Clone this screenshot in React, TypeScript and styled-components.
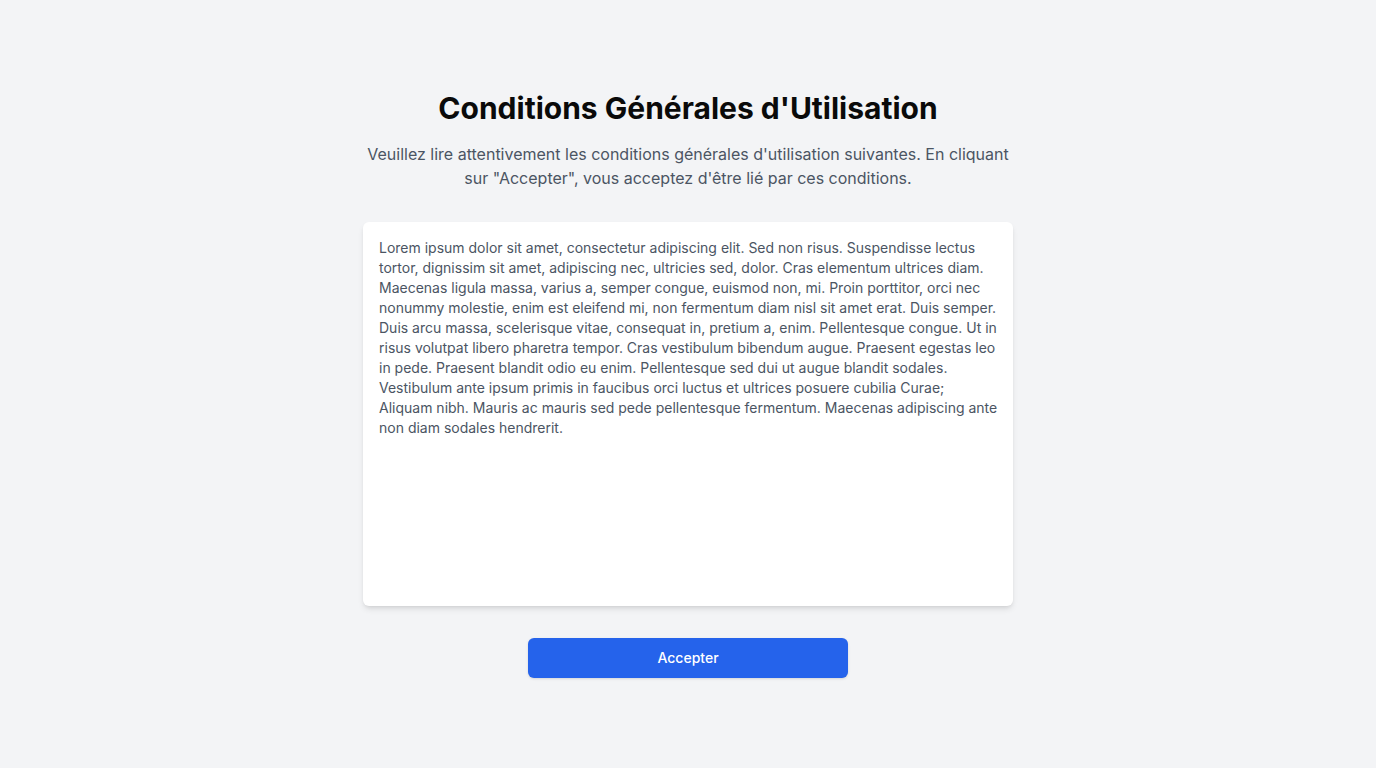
import styled, { createGlobalStyle } from "styled-components";

const GlobalStyle = createGlobalStyle`
	html, body {
		margin: 0;
		padding: 0;
		background-color: #f3f4f6;
		font-family: Inter, "Noto Sans", "Liberation Sans", sans-serif;
	}
	* {
		box-sizing: border-box;
	}
`;

const StyledPage = styled.main`
	min-height: 100vh;
	display: flex;
	flex-direction: column;
	align-items: center;
	justify-content: center;
	padding: 0 16px;
`;

const StyledTitle = styled.h1`
	margin: 0 0 16px;
	font-size: 30px;
	line-height: 36px;
	font-weight: 700;
	color: #0a0a0a;
	text-align: center;
`;

const StyledIntro = styled.p`
	margin: 0 0 32px;
	max-width: 650px;
	font-size: 16px;
	line-height: 24px;
	color: #4b5563;
	text-align: center;
`;

const StyledTermsBox = styled.div`
	width: 650px;
	height: 384px;
	overflow-y: auto;
	padding: 16px 12px 16px 16px;
	background-color: #ffffff;
	border-radius: 6px;
	box-shadow: 0 4px 6px -1px rgba(0, 0, 0, 0.1), 0 2px 4px -2px rgba(0, 0, 0, 0.1);
	font-size: 14px;
	line-height: 20px;
	color: #4b5563;

	p {
		margin: 0;
	}
`;

const StyledAcceptButton = styled.button`
	margin-top: 32px;
	width: 320px;
	height: 40px;
	padding: 0 0 2px;
	border: none;
	border-radius: 6px;
	background-color: #2563eb;
	color: #ffffff;
	font-family: inherit;
	font-size: 14px;
	font-weight: 500;
	cursor: pointer;
	box-shadow: 0 1px 3px rgba(0, 0, 0, 0.1), 0 1px 2px -1px rgba(0, 0, 0, 0.1);

	:hover {
		background-color: #1d4ed8;
	}
`;

const terms =
	"Lorem ipsum dolor sit amet, consectetur adipiscing elit. Sed non risus. Suspendisse lectus tortor, dignissim sit amet, adipiscing nec, ultricies sed, dolor. Cras elementum ultrices diam. Maecenas ligula massa, varius a, semper congue, euismod non, mi. Proin porttitor, orci nec nonummy molestie, enim est eleifend mi, non fermentum diam nisl sit amet erat. Duis semper. Duis arcu massa, scelerisque vitae, consequat in, pretium a, enim. Pellentesque congue. Ut in risus volutpat libero pharetra tempor. Cras vestibulum bibendum augue. Praesent egestas leo in pede. Praesent blandit odio eu enim. Pellentesque sed dui ut augue blandit sodales. Vestibulum ante ipsum primis in faucibus orci luctus et ultrices posuere cubilia Curae; Aliquam nibh. Mauris ac mauris sed pede pellentesque fermentum. Maecenas adipiscing ante non diam sodales hendrerit.";

export default function App() {
	return (
		<>
			<GlobalStyle />
			<StyledPage>
				<StyledTitle>Conditions Générales d'Utilisation</StyledTitle>
				<StyledIntro>
					Veuillez lire attentivement les conditions générales d'utilisation suivantes. En
					cliquant sur "Accepter", vous acceptez d'être lié par ces conditions.
				</StyledIntro>
				<StyledTermsBox>
					<p>{terms}</p>
				</StyledTermsBox>
				<StyledAcceptButton type="button">Accepter</StyledAcceptButton>
			</StyledPage>
		</>
	);
}
